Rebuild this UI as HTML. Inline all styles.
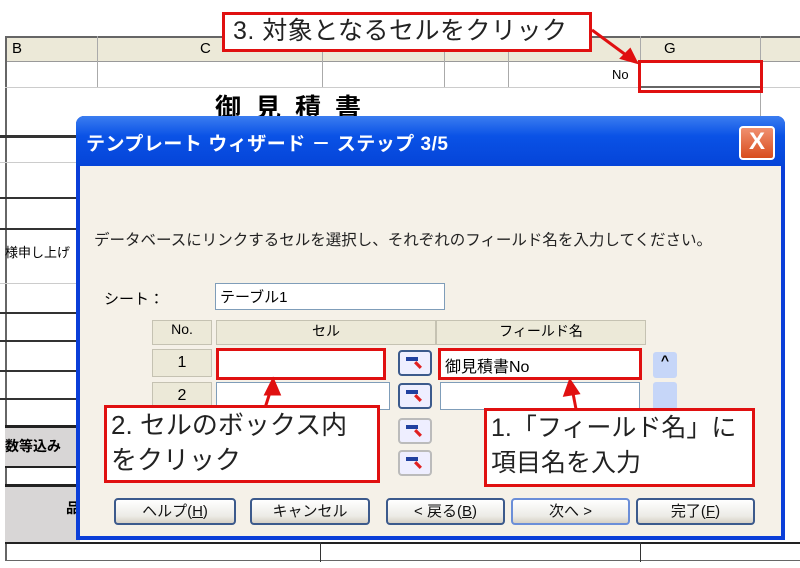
<!DOCTYPE html>
<html><head><meta charset="utf-8"><style>
*{margin:0;padding:0;box-sizing:border-box}
body{width:800px;height:568px;background:#fff;position:relative;overflow:hidden;font-family:"Liberation Sans","Noto Sans CJK JP",sans-serif;color:#000}
.a{position:absolute}
.hl{position:absolute;left:0;width:80px;height:2px;background:#333}
.vl{position:absolute;width:1px;background:#aaa}
.red{position:absolute;border:3px solid #e01010;background:#fff;white-space:nowrap}
.btn{position:absolute;top:498px;height:27px;border:2px solid #3c5a8c;border-radius:4px;background:linear-gradient(#fff,#ecebe6 70%,#d6d0c5);font-size:15px;text-align:center;line-height:23px;color:#111}
.inp{position:absolute;background:#fff;border:1px solid #7f9db9}
.icb{position:absolute;width:34px;height:26px;border:2px solid #3c5a8c;border-radius:4px;background:#eef}
.icb:before{content:"";position:absolute;left:6px;top:5px;width:12px;height:4px;background:#2040a0}
.icb:after{content:"";position:absolute;left:14px;top:9px;width:8px;height:8px;background:#e02020;transform:rotate(45deg) scaleY(.4)}
.hdr{position:absolute;background:#ece9d8;border:1px solid #c5c2b2;font-size:14px;text-align:center}
</style></head><body>
<div class="a" style="left:5px;top:36px;width:795px;height:26px;background:#ece9d8;border-top:2px solid #666;border-bottom:1px solid #999"></div>
<div class="a" style="left:5px;top:36px;width:2px;height:525px;background:#666"></div>
<div class="a" style="left:12px;top:40px;font-size:15px">B</div>
<div class="a" style="left:200px;top:40px;font-size:15px">C</div>
<div class="a" style="left:664px;top:40px;font-size:15px">G</div>
<div class="vl" style="left:97px;top:36px;height:52px"></div>
<div class="vl" style="left:322px;top:36px;height:52px"></div>
<div class="vl" style="left:444px;top:36px;height:52px"></div>
<div class="vl" style="left:508px;top:36px;height:52px"></div>
<div class="vl" style="left:640px;top:36px;height:52px"></div>
<div class="vl" style="left:760px;top:36px;height:500px"></div>
<div class="a" style="left:5px;top:87px;width:795px;height:1px;background:#ccc"></div>
<div class="a" style="left:612px;top:67px;font-size:13px">No</div>
<div class="a" style="left:640px;top:86px;width:120px;height:2px;background:#666"></div>
<div class="a" style="left:638px;top:60px;width:125px;height:33px;border:3px solid #e01010"></div>
<div class="a" style="left:215px;top:88px;font-size:26px;font-weight:bold;letter-spacing:14px">御見積書</div>
<div class="hl" style="top:135px;height:3px"></div>
<div class="hl" style="top:162px;background:#ccc;height:1px"></div>
<div class="hl" style="top:197px"></div>
<div class="hl" style="top:228px"></div>
<div class="a" style="left:5px;top:242px;font-size:13px">様申し上げ</div>
<div class="hl" style="top:283px;background:#ccc;height:1px"></div>
<div class="hl" style="top:312px"></div>
<div class="hl" style="top:340px"></div>
<div class="hl" style="top:370px"></div>
<div class="hl" style="top:398px"></div>
<div class="a" style="left:5px;top:425px;width:75px;height:43px;background:#d8d6d6;border-top:3px solid #222;border-bottom:2px solid #222"></div>
<div class="a" style="left:5px;top:436px;font-size:14px;font-weight:bold">数等込み</div>
<div class="a" style="left:5px;top:484px;width:75px;height:58px;background:#d8d6d6;border-top:3px solid #222"></div>
<div class="a" style="left:66px;top:498px;font-size:14px;font-weight:bold">品</div>
<div class="a" style="left:5px;top:542px;width:795px;height:2px;background:#222"></div>
<div class="a" style="left:5px;top:560px;width:795px;height:1px;background:#666"></div>
<div class="a" style="left:320px;top:542px;width:1px;height:20px;background:#333"></div>
<div class="a" style="left:640px;top:542px;width:1px;height:20px;background:#333"></div>
<div class="a" style="left:76px;top:116px;width:709px;height:424px;background:#0a3ed8;border-radius:8px 8px 0 0"></div>
<div class="a" style="left:76px;top:116px;width:709px;height:50px;background:linear-gradient(#3b7df0,#0a52e6 40%,#0544d8);border-radius:8px 8px 0 0"></div>
<div class="a" style="left:86px;top:129px;font-size:19px;color:#fff;font-weight:bold;white-space:nowrap;letter-spacing:.5px">テンプレート ウィザード － ステップ 3/5</div>
<div class="a" style="left:739px;top:126px;width:36px;height:34px;border:2px solid #fff;border-radius:4px;background:linear-gradient(#f09070,#d84c1c);color:#fff;font-size:24px;text-align:center;line-height:28px;font-weight:bold">X</div>
<div class="a" style="left:80px;top:166px;width:701px;height:370px;background:#f5f1e8"></div>
<div class="a" style="left:94px;top:228px;font-size:15.5px;color:#222;white-space:nowrap">データベースにリンクするセルを選択し、それぞれのフィールド名を入力してください。</div>
<div class="a" style="left:104px;top:288px;font-size:15px">シート：</div>
<div class="inp" style="left:215px;top:283px;width:230px;height:27px;font-size:15px;padding:2px 4px">テーブル1</div>
<div class="hdr" style="left:152px;top:320px;width:60px;height:25px">No.</div>
<div class="hdr" style="left:216px;top:320px;width:220px;height:25px">セル</div>
<div class="hdr" style="left:436px;top:320px;width:210px;height:25px">フィールド名</div>
<div class="hdr" style="left:152px;top:349px;width:60px;height:28px;line-height:26px;font-size:16px">1</div>
<div class="hdr" style="left:152px;top:382px;width:60px;height:28px;line-height:26px;font-size:16px">2</div>
<div class="red" style="left:216px;top:348px;width:170px;height:32px"></div>
<div class="inp" style="left:216px;top:382px;width:174px;height:28px"></div>
<div class="icb" style="left:398px;top:350px"></div>
<div class="icb" style="left:398px;top:383px"></div>
<div class="icb" style="left:398px;top:418px;border-color:#bbb"></div>
<div class="icb" style="left:398px;top:450px;border-color:#bbb"></div>
<div class="red" style="left:438px;top:348px;width:204px;height:32px;font-size:16px;padding:2px 4px">御見積書No</div>
<div class="inp" style="left:440px;top:382px;width:200px;height:28px"></div>
<div class="a" style="left:653px;top:352px;width:24px;height:26px;background:#c6d6f8;border-radius:3px;text-align:center;font-size:14px;font-weight:bold">^</div>
<div class="a" style="left:653px;top:382px;width:24px;height:28px;background:#c6d6f8;border-radius:3px"></div>
<svg class="a" style="left:0;top:0" width="800" height="568">
<g stroke="#e01010" stroke-width="3" fill="#e01010">
<line x1="592" y1="30" x2="630" y2="58"/><polygon points="636,62 622,58 630,50"/>
<line x1="265" y1="408" x2="272" y2="386"/><polygon points="273,380 266,394 279,394"/>
<line x1="576" y1="409" x2="572" y2="388"/><polygon points="570,381 565,395 578,393"/>
</g></svg>
<div class="red" style="left:222px;top:12px;width:370px;height:40px;font-size:25px;line-height:32px;padding-left:8px;color:#222;letter-spacing:.5px">3. 対象となるセルをクリック</div>
<div class="red" style="left:104px;top:405px;width:276px;height:78px;font-size:26px;line-height:35px;padding:0 4px;color:#222">2. セルのボックス内<br>をクリック</div>
<div class="red" style="left:484px;top:408px;width:271px;height:79px;font-size:25px;line-height:35px;padding:0 4px;color:#222">1.「フィールド名」に<br>項目名を入力</div>
<div class="btn" style="left:114px;width:122px">ヘルプ(<u>H</u>)</div>
<div class="btn" style="left:250px;width:120px">キャンセル</div>
<div class="btn" style="left:386px;width:119px">&lt; 戻る(<u>B</u>)</div>
<div class="btn" style="left:511px;width:119px;border-color:#6b8ed8">次へ &gt;</div>
<div class="btn" style="left:636px;width:119px">完了(<u>F</u>)</div>
</body></html>
